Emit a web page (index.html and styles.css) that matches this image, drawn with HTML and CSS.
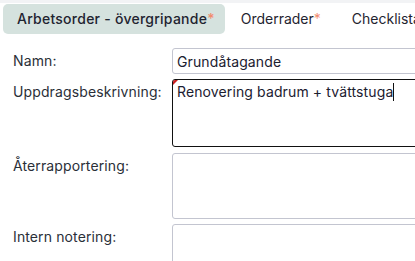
FILE: index.html
```html
<!DOCTYPE html>
<html lang="sv">

<head>
    <meta charset="UTF-8">
    <meta name="viewport" content="width=device-width, initial-scale=1.0">
    <title>Arbetsorder</title>
    <link rel="stylesheet" href="styles.css">
</head>

<body>
    <div class="topbar"></div>
    <div class="tabs">
        <div class="tab active">Arbetsorder - övergripande<span class="req">*</span></div>
        <div class="tab">Orderrader<span class="req">*</span></div>
        <div class="tab">Checklista</div>
    </div>

    <div class="form">
        <div class="row">
            <label class="label">Namn:</label>
            <input class="field input" type="text" value="Grundåtagande">
        </div>
        <div class="row">
            <label class="label">Uppdragsbeskrivning:</label>
            <div class="field area focused required">Renovering badrum + tvättstuga<span class="caret"></span></div>
        </div>
        <div class="row">
            <label class="label">Återrapportering:</label>
            <div class="field area"></div>
        </div>
        <div class="row">
            <label class="label">Intern notering:</label>
            <div class="field area"></div>
        </div>
    </div>
</body>

</html>
```

FILE: styles.css
```css
body {
    margin: 0;
    font-family: Inter, "Noto Sans", sans-serif;
    font-size: 14px;
    letter-spacing: 0.12px;
    color: #222833;
    background-color: white;
    overflow: hidden;
    width: 415px;
    height: 261px;
}

.topbar {
    height: 3px;
    background-color: #f2f3f5;
}

.tabs {
    display: flex;
    padding-left: 3px;
    margin-top: 1px;
    white-space: nowrap;
    overflow: hidden;
}

.tab {
    height: 30px;
    line-height: 30px;
    padding: 0 15px 0 16px;
    border-radius: 5px;
    letter-spacing: 0;
    color: #1f2430;
}

.tab.active {
    background-color: #d5e2de;
    font-weight: 500;
    letter-spacing: 0.25px;
    padding: 0 10px 0 14px;
}

.req {
    color: #f28b6f;
}

.form {
    padding: 14px 0 0 13px;
}

.row {
    display: flex;
    align-items: flex-start;
    margin-bottom: 5px;
}

.label {
    width: 159px;
    flex-shrink: 0;
    padding-top: 4px;
    line-height: 17px;
    color: #2a2f38;
}

.field {
    box-sizing: border-box;
    width: 300px;
    flex-shrink: 0;
    border: 1px solid #c3c5d0;
    border-radius: 3px;
    font-family: inherit;
    font-size: 14px;
    letter-spacing: 0.12px;
    color: #1b2030;
    background-color: white;
}

.input {
    height: 26px;
    padding: 0 4px;
    margin: 0;
    outline: none;
}

.area {
    position: relative;
    height: 68px;
    padding: 2px 4px;
    line-height: 20px;
}

.area.focused {
    border-color: #111;
    margin-bottom: 1px;
}

.row:nth-child(3) .area {
    height: 66px;
}

.required::before {
    content: "";
    position: absolute;
    top: 0;
    left: 0;
    border-top: 5px solid #cc1f1f;
    border-right: 5px solid transparent;
    border-top-left-radius: 2px;
}

.caret {
    display: inline-block;
    width: 1px;
    height: 18px;
    background-color: #111;
    vertical-align: -4px;
}
```
